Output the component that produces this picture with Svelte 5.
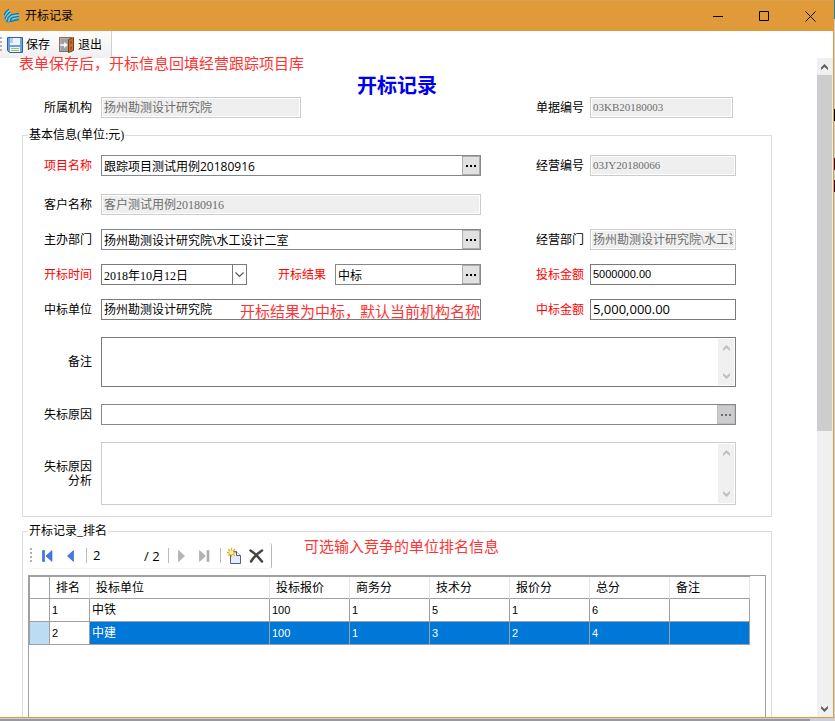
<script>
  let form = $state({
    org: "扬州勘测设计研究院",
    billNo: "03KB20180003",
    project: "跟踪项目测试用例20180916",
    manageNo: "03JY20180066",
    customer: "客户测试用例20180916",
    dept: "扬州勘测设计研究院\\水工设计二室",
    manageDept: "扬州勘测设计研究院\\水工设计二室",
    openDate: "2018年10月12日",
    result: "中标",
    bidAmount: "5000000.00",
    winner: "扬州勘测设计研究院",
    winAmount: "5,000,000.00",
    remark: "",
    lostReason: "",
    lostAnalysis: "",
  });

  const columns = ["排名", "投标单位", "投标报价", "商务分", "技术分", "报价分", "总分", "备注"];
  const rows = [
    ["1", "中铁", "100", "1", "5", "1", "6", ""],
    ["2", "中建", "100", "1", "3", "2", "4", ""],
  ];

  let selected = $state(1);
  let position = $state("2");
  const thumb = 57;
</script>

{#snippet dots()}
  <svg width="10" height="2" viewBox="0 0 10 2" fill="currentColor">
    <path d="M0 0h2v2H0zM4 0h2v2H4zM8 0h2v2H8z" />
  </svg>
{/snippet}

{#snippet arrow(down)}
  <svg class:down width="7" height="6" viewBox="0 0 7 6" fill="currentColor">
    <path d="M3.500 0L7 3.500V6L3.500 3L0 6V3.500z" />
  </svg>
{/snippet}

{#snippet memoBar()}
  <div class="memo-bar">
    {@render arrow(false)}
    {@render arrow(true)}
  </div>
{/snippet}

<div class="desktop">
  <div class="window">
    <header class="titlebar">
      <svg width="17" height="16" viewBox="0 0 17 16" fill="none">
        <path d="M1 8Q1 3 6 1L7 3L9 6L16 5V12L8 14L5 15Q1 13 1 8z" fill="#3fa6bd" />
        <path d="M2 9Q3 5 7 2M3 12Q3 8 8 5M6 14Q5 10 9 8M9 8L16 7M9 11L16 9.500" stroke="#b9dedb" stroke-width=".8" />
        <path d="M1 7Q2 3 6 1M2 11Q3 6 7 4M4 14Q4 9 9 6.500L16 5.500M7 14Q7 10 10 9.500L16 8.500M8 13.500L16 11.500" stroke="#1b6f94" />
      </svg>
      <span class="caption">开标记录</span>
      <button class="sys" aria-label="最小化">
        <svg width="11" height="11" viewBox="0 0 11 11"><path d="M0 5.500h10" stroke="#000" /></svg>
      </button>
      <button class="sys" aria-label="最大化">
        <svg width="11" height="11" viewBox="0 0 11 11"><path d="M.5.5h9v9h-9z" fill="none" stroke="#000" /></svg>
      </button>
      <button class="sys" aria-label="关闭">
        <svg width="11" height="11" viewBox="0 0 11 11"><path d="M.5.5l10 10M10.500.5l-10 10" stroke="#000" /></svg>
      </button>
    </header>

    <div class="toolbar">
      <span class="grip"></span>
      <button>
        <svg width="16" height="16" viewBox="0 0 16 16">
          <path d="M.5.5h15v15h-13l-2-2z" fill="#6a9fe2" stroke="#2f5fa8" />
          <path d="M3 1h10v7H3z" fill="#edf4fc" />
          <path d="M3 1h3v5H3z" fill="#b4cdec" />
          <path d="M3 10h10v5H3z" fill="#f5f8f2" />
          <path d="M4 11.500h8M4 13.500h8" stroke="#8fc46b" />
        </svg>
        保存
      </button>
      <button>
        <svg width="16" height="16" viewBox="0 0 16 16">
          <path d="M.5.5h12v14h-12z" fill="#b9b2ae" stroke="#8d6a55" />
          <path d="M2 2h8v12H2z" fill="#9ba1a4" />
          <path d="M1 7h4V4.500L9 8l-4 3.500V9H1z" fill="#fff" stroke="#a4a4a4" stroke-width=".5" />
          <path d="M9.500 2.500l5-2v13l-5 2z" fill="#c0713c" stroke="#7c3d19" />
          <path d="M11 4.500l2-1v3l-2 1zM11 10l2-1v3l-2 1z" fill="#9b5326" />
        </svg>
        退出
      </button>
      <p class="note over-toolbar">表单保存后，开标信息回填经营跟踪项目库</p>
    </div>

    <div class="view">
      <main>
        <h1>开标记录</h1>
        <div class="grid head">
          <label for="org">所属机构</label>
          <input id="org" class="short" bind:value={form.org} disabled />
          <label class="second" for="billNo">单据编号</label>
          <input id="billNo" class="code" bind:value={form.billNo} disabled />
        </div>

        <fieldset class="basic">
          <legend>基本信息(单位:元)</legend>
          <div class="grid">
            <label class="required" for="project">项目名称</label>
            <div class="picker">
              <input id="project" class="wide-digits" bind:value={form.project} />
              <button aria-label="选择项目">{@render dots()}</button>
            </div>
            <label class="second" for="manageNo">经营编号</label>
            <input id="manageNo" class="code" bind:value={form.manageNo} disabled />
          </div>

          <div class="grid middle">
            <label for="customer">客户名称</label>
            <input id="customer" bind:value={form.customer} disabled />
            <span></span>
            <span></span>

            <label for="dept">主办部门</label>
            <div class="picker">
              <input id="dept" class="wide-digits" bind:value={form.dept} />
              <button aria-label="选择部门">{@render dots()}</button>
            </div>
            <label class="second" for="manageDept">经营部门</label>
            <input id="manageDept" bind:value={form.manageDept} disabled />

            <label class="required" for="openDate">开标时间</label>
            <div class="pair">
              <div class="picker date">
                <input id="openDate" bind:value={form.openDate} />
                <button aria-label="选择日期">
                  <svg width="9" height="6" viewBox="0 0 9 6" fill="none" stroke="#555">
                    <path d="M.5.5l4 4l4-4" stroke-width="1.200" />
                  </svg>
                </button>
              </div>
              <label class="required" for="result">开标结果</label>
              <div class="picker">
                <input id="result" class="wide-digits" bind:value={form.result} />
                <button aria-label="选择结果">{@render dots()}</button>
              </div>
            </div>
            <label class="second required" for="bidAmount">投标金额</label>
            <input id="bidAmount" class="amount" bind:value={form.bidAmount} />

            <label for="winner">中标单位</label>
            <div class="winner">
              <input id="winner" bind:value={form.winner} />
              <p class="note over-input">开标结果为中标，默认当前机构名称</p>
            </div>
            <label class="second required" for="winAmount">中标金额</label>
            <input id="winAmount" class="money" bind:value={form.winAmount} />
          </div>

          <div class="grid memos">
            <label for="remark">备注</label>
            <div class="memo">
              <textarea id="remark" bind:value={form.remark}></textarea>
              {@render memoBar()}
            </div>
            <label for="lostReason">失标原因</label>
            <div class="picker off">
              <input id="lostReason" bind:value={form.lostReason} />
              <button aria-label="选择失标原因">{@render dots()}</button>
            </div>
            <label for="lostAnalysis">失标原因<br />分析</label>
            <div class="memo tall">
              <textarea id="lostAnalysis" bind:value={form.lostAnalysis}></textarea>
              {@render memoBar()}
            </div>
          </div>
        </fieldset>

        <fieldset class="ranking">
          <legend>开标记录_排名</legend>
          <div class="ranking-head">
            <div class="navigator">
              <span class="grip"></span>
              <button aria-label="第一条">
                <svg width="11" height="12" viewBox="0 0 11 12" fill="#3f7bea" stroke="#1d4bb5" stroke-width=".5">
                  <path d="M.5.5h2v11h-2zM10 .5v11L4 6z" />
                </svg>
              </button>
              <button aria-label="上一条">
                <svg width="7" height="12" viewBox="0 0 7 12" fill="#3f7bea" stroke="#1d4bb5" stroke-width=".5">
                  <path d="M6.500.5v11L.5 6z" />
                </svg>
              </button>
              <span class="sep"></span>
              <input aria-label="当前位置" bind:value={position} />
              <span class="total">/ {rows.length}</span>
              <span class="sep"></span>
              <button aria-label="下一条">
                <svg width="7" height="12" viewBox="0 0 7 12" fill="#b4b4b4" stroke="#999" stroke-width=".5">
                  <path d="M.5.5v11L6.500 6z" />
                </svg>
              </button>
              <button aria-label="最后一条">
                <svg width="11" height="12" viewBox="0 0 11 12" fill="#b4b4b4" stroke="#999" stroke-width=".5">
                  <path d="M.5.5v11L6.500 6zM8 .5h2v11H8z" />
                </svg>
              </button>
              <span class="sep"></span>
              <button aria-label="新增">
                <svg width="14" height="16" viewBox="0 0 14 16">
                  <path d="M3.500 3.500h6l4 4v8h-10z" fill="#e3edfb" stroke="#4d6185" />
                  <path d="M9.500 3.500v4h4" fill="#fff" stroke="#4d6185" />
                  <path d="M4.500 0v9M0 4.500h9M1.200 1.200l6.600 6.600M7.800 1.200l-6.600 6.600" stroke="#e5b622" stroke-width="1.300" />
                  <circle cx="4.500" cy="4.500" r="2" fill="#fff1a0" />
                </svg>
              </button>
              <button aria-label="删除">
                <svg width="15" height="14" viewBox="0 0 15 14" fill="none" stroke="#444" stroke-linecap="round">
                  <path d="M1.500 1.500Q7 5 13 12.500M13 1.500Q6 6 2 12.500" stroke-width="2.500" />
                </svg>
              </button>
            </div>
            <p class="note">可选输入竞争的单位排名信息</p>
          </div>

          <div class="data">
            <table>
              <colgroup>
                <col class="marker" />
                <col class="rank" />
                <col class="company" />
              </colgroup>
              <thead>
                <tr>
                  <th class="corner"></th>
                  {#each columns as column}
                    <th>{column}</th>
                  {/each}
                </tr>
              </thead>
              <tbody>
                {#each rows as row, i}
                  <tr class:selected={selected === i} onclick={() => (selected = i)}>
                    <th></th>
                    {#each row as cell, j}
                      <td class:amount={j !== 1}>{cell}</td>
                    {/each}
                  </tr>
                {/each}
              </tbody>
            </table>
          </div>
        </fieldset>
      </main>

      <div class="scrollbar">
        <span class="end">{@render arrow(false)}</span>
        <div class="track">
          <div class="thumb" style="height: {thumb}%"></div>
        </div>
        <span class="end">{@render arrow(true)}</span>
      </div>
    </div>
  </div>
</div>

<style>
  * {
    box-sizing: border-box;
  }
  :global(body) {
    overflow: hidden;
  }
  .desktop {
    height: 100vh;
    padding: 0 1px 3px 0;
    background: linear-gradient(#999 0 0) left bottom / 97% 2px no-repeat,
      linear-gradient(#000 0 0) right 109px / 1px 12px no-repeat,
      linear-gradient(#3b0a35 0 0) right 158px / 1px 12px no-repeat,
      linear-gradient(#3b0a35 0 0) right 180px / 1px 12px no-repeat,
      linear-gradient(#2a7f94 0 0) right top / 1px 19px no-repeat, #ccd0d6;
    font: 12px/14px "Liberation Serif", "Noto Sans CJK SC", sans-serif;
    color: #000;
  }
  .window {
    height: 100%;
    display: flex;
    flex-direction: column;
    background: #fff;
    border: solid #e09a39;
    border-width: 0 1px 1px 0;
  }
  button {
    display: flex;
    align-items: center;
    justify-content: center;
    padding: 0;
    border: 0;
    background: none;
    font: inherit;
    color: inherit;
  }
  svg {
    flex: none;
    display: block;
  }
  svg.down {
    transform: rotate(180deg);
  }

  .titlebar {
    flex: none;
    display: flex;
    align-items: center;
    height: 31px;
    padding-left: 3px;
    background: #e09a39;
    border-top: 1px solid #d9a04e;
  }
  .caption {
    flex: 1;
    margin-left: 5px;
  }
  .sys {
    width: 46px;
    height: 30px;
  }

  .toolbar {
    flex: none;
    position: relative;
    display: flex;
    align-items: center;
    align-self: flex-start;
    gap: 9px;
    height: 27px;
    padding-right: 9px;
    background: linear-gradient(#fdfdfd, #f0f0f0);
    border-right: 1px solid #d0d0d0;
  }
  .toolbar button {
    gap: 3px;
  }
  .grip {
    width: 2px;
    height: 16px;
    background: repeating-linear-gradient(#b0b0b0 0 2px, transparent 2px 4px);
  }
  .toolbar .grip {
    margin-right: -4px;
  }

  .note {
    margin: 0;
    font-size: 15px;
    line-height: 16px;
    white-space: nowrap;
    color: #ff3333;
  }
  .over-toolbar {
    position: absolute;
    left: 19px;
    top: 25px;
    z-index: 1;
  }
  .over-input {
    position: absolute;
    right: 1px;
    bottom: 0;
  }

  .view {
    flex: 1;
    min-height: 0;
    display: flex;
  }
  main {
    flex: 1;
    min-width: 0;
    display: flex;
    flex-direction: column;
    padding: 18px 45px 0 22px;
    overflow: hidden;
  }
  h1 {
    margin: 0;
    font-size: 20px;
    line-height: 21px;
    text-align: center;
    color: #0000f0;
  }

  .grid {
    display: grid;
    grid-template-columns: 78px minmax(0, 1fr) 109px 146px;
    align-items: center;
  }
  .head {
    grid-template-columns: 78px minmax(0, 1fr) 109px 143px;
    padding: 0 39px 0 1px;
  }
  .middle {
    margin: 18px 0 17px;
    row-gap: 14px;
  }
  .memos {
    grid-template-columns: 78px minmax(0, 1fr);
    row-gap: 17px;
  }
  label {
    padding-right: 9px;
    text-align: right;
  }
  label.second {
    padding-right: 6px;
  }
  .required {
    color: #ff0000;
  }

  input,
  textarea {
    width: 100%;
    min-width: 0;
    height: 21px;
    margin: 0;
    padding: 0 2px 1px;
    border: 1px solid #7a7a7a;
    border-radius: 0;
    outline: 0;
    background: #fff;
    font: inherit;
    color: #000;
  }
  input:disabled {
    border-color: #ccc;
    background: #efefef;
    box-shadow: inset 0 0 0 1px #fff;
    color: #6d6d6d;
  }
  input.short {
    width: 200px;
  }
  input.code {
    font-size: 11px;
  }
  .amount {
    font: 11px "Liberation Sans", sans-serif;
  }
  .wide-digits {
    font-family: "Open Sans", "Noto Sans CJK SC", sans-serif;
  }
  input.money {
    font: 13px "Open Sans", sans-serif;
  }

  .picker {
    display: flex;
    height: 21px;
    border: 1px solid #828790;
  }
  .picker input {
    flex: 1;
    height: 19px;
    padding-bottom: 0;
    border: 0;
  }
  .picker button {
    width: 18px;
    border: 1px solid #adadad;
    background: #e1e1e1;
  }
  .picker.off button {
    border-color: #bfbfbf;
    background: #ccc;
    color: #6d6d6d;
  }
  .picker.date {
    border-color: #7a7a7a;
  }
  .picker.date button {
    width: 14px;
    border: 0;
    border-left: 1px solid #7a7a7a;
    background: #fff;
  }
  .pair {
    display: flex;
    align-items: center;
  }
  .pair .picker {
    width: 146px;
  }
  .pair label {
    flex: 1;
  }
  .winner {
    position: relative;
  }
  .winner input {
    display: block;
  }

  .memo {
    display: flex;
    height: 50px;
    border: 1px solid #7a7a7a;
  }
  .memo.tall {
    height: 63px;
    border-color: #ccc;
  }
  .memo textarea {
    flex: 1;
    height: 100%;
    border: 0;
    resize: none;
  }
  .memo-bar {
    display: flex;
    flex-direction: column;
    align-items: center;
    justify-content: space-between;
    width: 16px;
    margin: 1px;
    padding: 6px 0;
    background: #f0f0f0;
    color: #bfbfbf;
  }

  fieldset {
    min-width: 0;
    margin: 0;
    border: 1px solid #dcdcdc;
  }
  legend {
    margin-left: 5px;
    padding: 0 1px;
  }
  .basic {
    margin: 10px 0 7px;
    padding: 13px 35px 11px 0;
  }
  .ranking {
    flex: 1;
    display: flex;
    flex-direction: column;
    padding: 0 5px;
    border-bottom: 0;
  }
  .ranking legend {
    margin-left: 0;
  }
  .ranking-head {
    flex: none;
    display: flex;
    align-items: flex-start;
    gap: 32px;
    height: 37px;
    padding-top: 1px;
  }
  .navigator {
    display: flex;
    align-items: center;
    height: 26px;
    margin-top: 4px;
    padding: 0 3px 0 2px;
    border-right: 1px solid #b8b8b8;
    border-bottom: 1px solid #f3f3f3;
    border-radius: 3px;
    font: 13px "Open Sans", sans-serif;
  }
  .navigator .grip {
    margin-right: 4px;
  }
  .navigator button {
    width: 23px;
    height: 23px;
  }
  .navigator input {
    width: 56px;
    padding-left: 5px;
    border: 0;
  }
  .total {
    width: 20px;
  }
  .sep {
    width: 1px;
    height: 15px;
    margin: 0 1px 0 4px;
    background: #bdbdbd;
  }

  .data {
    flex: 1;
    border: 1px solid #a0a0a0;
    border-bottom: 0;
    overflow: hidden;
  }
  table {
    table-layout: fixed;
    width: 721px;
    border: solid #a0a0a0;
    border-width: 1px 0 0 1px;
    border-spacing: 0;
  }
  .marker {
    width: 20px;
  }
  .rank {
    width: 40px;
  }
  .company {
    width: 180px;
  }
  th,
  td {
    height: 23px;
    padding: 0 0 0 2px;
    border: solid #a0a0a0;
    border-width: 0 1px 1px 0;
    font-weight: normal;
    text-align: left;
  }
  thead th {
    height: 22px;
    padding-left: 6px;
    border-right-color: #e5e5e5;
  }
  thead .corner {
    border-right-color: #a0a0a0;
  }
  .selected td {
    background: #0078d7;
    color: #fff;
  }
  .selected td:nth-child(2) {
    background: #fff;
    color: #000;
  }
  .selected th {
    background: #bcdcf4;
  }

  .scrollbar {
    flex: none;
    display: flex;
    flex-direction: column;
    width: 16px;
    padding-right: 1px;
    background: #f0f0f0;
    color: #606060;
  }
  .end {
    display: flex;
    align-items: center;
    justify-content: center;
    height: 17px;
  }
  .track {
    flex: 1;
  }
  .thumb {
    background: #cdcdcd;
  }
</style>
